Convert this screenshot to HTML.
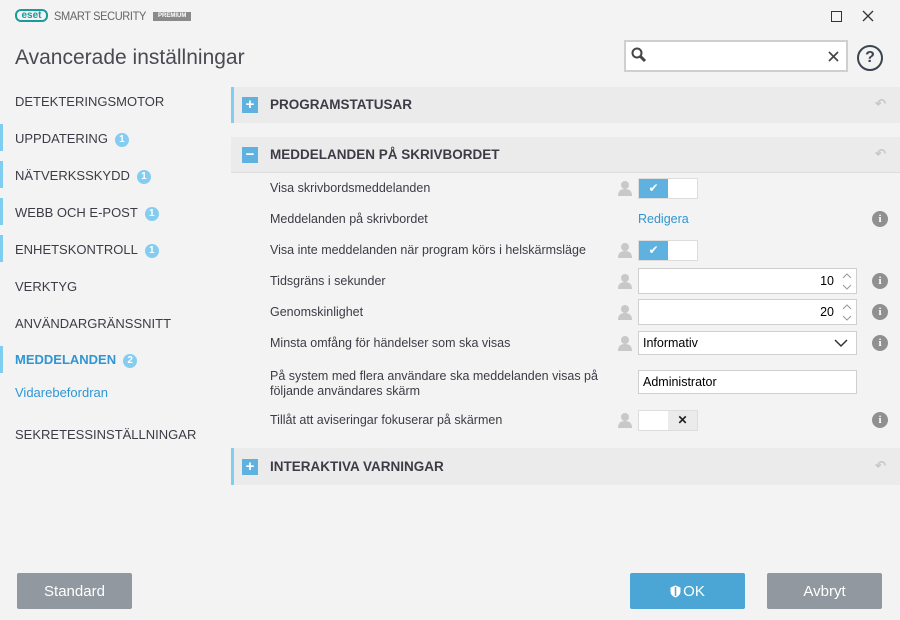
<!DOCTYPE html>
<html><head><meta charset="utf-8"><style>
*{box-sizing:border-box;margin:0;padding:0}
body{width:900px;height:620px;background:#f3f3f3;font-family:"Liberation Sans",sans-serif;color:#3c3c46;position:relative;overflow:hidden}
.a{position:absolute}
.nav{position:absolute;left:15px;font-size:13px;color:#3c3c46;white-space:nowrap}
.bar{position:absolute;left:0;width:3px;height:27px;background:#7fcdf0}
.badge{display:inline-block;width:14px;height:14px;border-radius:7px;background:#84cdf1;color:#fff;font-size:10px;font-weight:bold;text-align:center;line-height:14px;margin-left:7px;vertical-align:1px}
.sec{position:absolute;left:231px;width:669px;background:#ebebeb;font-weight:bold;font-size:13.5px;color:#3c3c46}
.sq{position:absolute;left:11px;width:16px;height:16px;background:#5fb1e0;color:#fff;text-align:center;line-height:16px;font-size:15px;font-weight:bold}
.lbl{position:absolute;left:270px;font-size:12.5px;color:#3c3c46}
.person{position:absolute;left:617px;width:16px;height:16px}
.tog{position:absolute;left:638px;width:60px;height:21px;border:1px solid #ddd;background:#fff}
.tog .on{position:absolute;left:0;top:0;width:29px;height:19px;background:#5fb1e0;color:#fff;text-align:center;font-size:12px;line-height:19px}
.info{position:absolute;left:872px;width:16px;height:16px;border-radius:8px;background:#909090;color:#fff;font-size:11px;font-weight:bold;text-align:center;line-height:16px;font-family:"Liberation Serif",serif}
.inp{position:absolute;left:638px;width:219px;height:26px;border:1px solid #cfcfcf;background:#fff;font-size:12.5px;color:#000;line-height:24px}
.spin{position:absolute;right:0;top:0;width:18px;height:24px}
.btn{position:absolute;top:573px;width:115px;height:36px;color:#fff;font-size:15px;text-align:center;line-height:38px;border-radius:2px}
.undo{position:absolute;right:14px;color:#c8c8c8;font-size:13px}
</style></head><body>
<div class="a" style="left:15px;top:9px;width:33px;height:13px;border:2px solid #1a9b9b;border-radius:6px;color:#1a9b9b;font-size:10px;font-weight:bold;line-height:9px;text-align:center">eset</div>
<div class="a" style="left:54px;top:9px;font-size:12px;color:#666;letter-spacing:-0.4px;transform:scaleX(0.92);transform-origin:left">SMART SECURITY</div>
<div class="a" style="left:153px;top:12px;background:#8a8a8a;color:#fff;font-size:6px;font-weight:bold;padding:1px 5px;line-height:7px">PREMIUM</div>
<div class="a" style="left:831px;top:11px;width:11px;height:11px;border:1px solid #333"></div>
<svg class="a" style="left:862px;top:10px" width="12" height="12"><path d="M1 1L11 11M11 1L1 11" stroke="#333" stroke-width="1.3"/></svg>
<div class="a" style="left:15px;top:46px;font-size:21px;color:#4a4a52">Avancerade inställningar</div>
<div class="a" style="left:624px;top:40px;width:224px;height:32px;border:2px solid #cfcfcf;background:#fff"></div>
<svg class="a" style="left:630px;top:46px" width="20" height="20"><circle cx="7" cy="7" r="4.5" fill="none" stroke="#444" stroke-width="2"/><line x1="10" y1="10" x2="15" y2="15" stroke="#444" stroke-width="3"/></svg>
<svg class="a" style="left:828px;top:51px" width="11" height="11"><path d="M1 1L10 10M10 1L1 10" stroke="#444" stroke-width="1.6"/></svg>
<div class="a" style="left:857px;top:45px;width:26px;height:26px;border:2px solid #3c4450;border-radius:13px;text-align:center;line-height:22px;font-size:16px;font-weight:bold;color:#3c4450">?</div>

<div class="nav" style="top:94px">DETEKTERINGSMOTOR</div>
<div class="bar" style="top:124px"></div><div class="nav" style="top:131px">UPPDATERING<span class="badge">1</span></div>
<div class="bar" style="top:161px"></div><div class="nav" style="top:168px">NÄTVERKSSKYDD<span class="badge">1</span></div>
<div class="bar" style="top:198px"></div><div class="nav" style="top:205px">WEBB OCH E-POST<span class="badge">1</span></div>
<div class="bar" style="top:235px"></div><div class="nav" style="top:242px">ENHETSKONTROLL<span class="badge">1</span></div>
<div class="nav" style="top:279px">VERKTYG</div>
<div class="nav" style="top:316px">ANVÄNDARGRÄNSSNITT</div>
<div class="bar" style="top:346px"></div><div class="nav" style="top:352px;color:#2f96d3;font-weight:bold">MEDDELANDEN<span class="badge">2</span></div>
<div class="nav" style="top:385px;color:#2f96d3">Vidarebefordran</div>
<div class="nav" style="top:427px">SEKRETESSINSTÄLLNINGAR</div>

<div class="sec" style="top:87px;height:36px;border-left:3px solid #7fcdf0"><div class="sq" style="top:10px;left:8px">+</div><div class="a" style="left:36px;top:10px">PROGRAMSTATUSAR</div><div class="undo" style="top:9px">↶</div></div>
<div class="sec" style="top:137px;height:36px;border-bottom:1px solid #ddd"><div class="sq" style="top:10px">−</div><div class="a" style="left:39px;top:10px">MEDDELANDEN PÅ SKRIVBORDET</div><div class="undo" style="top:9px">↶</div></div>

<svg width="0" height="0" style="position:absolute"><defs><g id="p"><circle cx="8" cy="5" r="4" fill="#c8c8c8"/><path d="M1 16 Q1 9 8 9 Q15 9 15 16Z" fill="#c8c8c8"/></g><g id="s"><path d="M5 9L9 5L13 9" fill="none" stroke="#999" stroke-width="1"/><path d="M5 16L9 20L13 16" fill="none" stroke="#999" stroke-width="1"/></g></defs></svg>

<div class="lbl" style="top:181px">Visa skrivbordsmeddelanden</div>
<svg class="person" style="top:180px"><use href="#p"/></svg>
<div class="tog" style="top:178px"><div class="on">✔</div></div>

<div class="lbl" style="top:212px">Meddelanden på skrivbordet</div>
<div class="a" style="left:638px;top:212px;font-size:12.5px;color:#2f96d3">Redigera</div>
<div class="info" style="top:211px">i</div>

<div class="lbl" style="top:243px">Visa inte meddelanden när program körs i helskärmsläge</div>
<svg class="person" style="top:242px"><use href="#p"/></svg>
<div class="tog" style="top:240px"><div class="on">✔</div></div>

<div class="lbl" style="top:274px">Tidsgräns i sekunder</div>
<svg class="person" style="top:273px"><use href="#p"/></svg>
<div class="inp" style="top:268px"><span style="position:absolute;right:22px">10</span><svg class="spin"><use href="#s"/></svg></div>
<div class="info" style="top:273px">i</div>

<div class="lbl" style="top:305px">Genomskinlighet</div>
<svg class="person" style="top:304px"><use href="#p"/></svg>
<div class="inp" style="top:299px"><span style="position:absolute;right:22px">20</span><svg class="spin"><use href="#s"/></svg></div>
<div class="info" style="top:304px">i</div>

<div class="lbl" style="top:336px">Minsta omfång för händelser som ska visas</div>
<svg class="person" style="top:335px"><use href="#p"/></svg>
<div class="inp" style="top:331px;height:24px;line-height:22px;padding-left:4px">Informativ<svg style="position:absolute;right:8px;top:7px" width="14" height="9"><path d="M1 1 L7 7 L13 1" fill="none" stroke="#333" stroke-width="1.5"/></svg></div>
<div class="info" style="top:335px">i</div>

<div class="lbl" style="top:369px;line-height:15px">På system med flera användare ska meddelanden visas på<br>följande användares skärm</div>
<div class="inp" style="top:370px;height:24px;line-height:22px;padding-left:4px">Administrator</div>

<div class="lbl" style="top:413px">Tillåt att aviseringar fokuserar på skärmen</div>
<svg class="person" style="top:412px"><use href="#p"/></svg>
<div class="tog" style="top:410px"><div style="position:absolute;left:29px;top:0;width:29px;height:19px;background:#ebebeb;text-align:center;line-height:19px;font-size:12px;font-weight:bold;color:#222">✕</div></div>
<div class="info" style="top:412px">i</div>

<div class="sec" style="top:448px;height:37px;border-left:3px solid #7fcdf0"><div class="sq" style="top:11px;left:8px">+</div><div class="a" style="left:36px;top:11px">INTERAKTIVA VARNINGAR</div><div class="undo" style="top:10px">↶</div></div>

<div class="btn" style="left:17px;background:#9298a0">Standard</div>
<div class="btn" style="left:630px;background:#4ba6d5"><svg width="11" height="13" style="vertical-align:-2px;margin-right:2px"><path d="M5.5 0.5L10.5 2.5V6.5Q10.5 10.5 5.5 12.5Q0.5 10.5 0.5 6.5V2.5Z" fill="#fff"/><path d="M5.5 2V11" stroke="#4ba6d5" stroke-width="1.5"/></svg>OK</div>
<div class="btn" style="left:767px;background:#9298a0">Avbryt</div>
</body></html>
